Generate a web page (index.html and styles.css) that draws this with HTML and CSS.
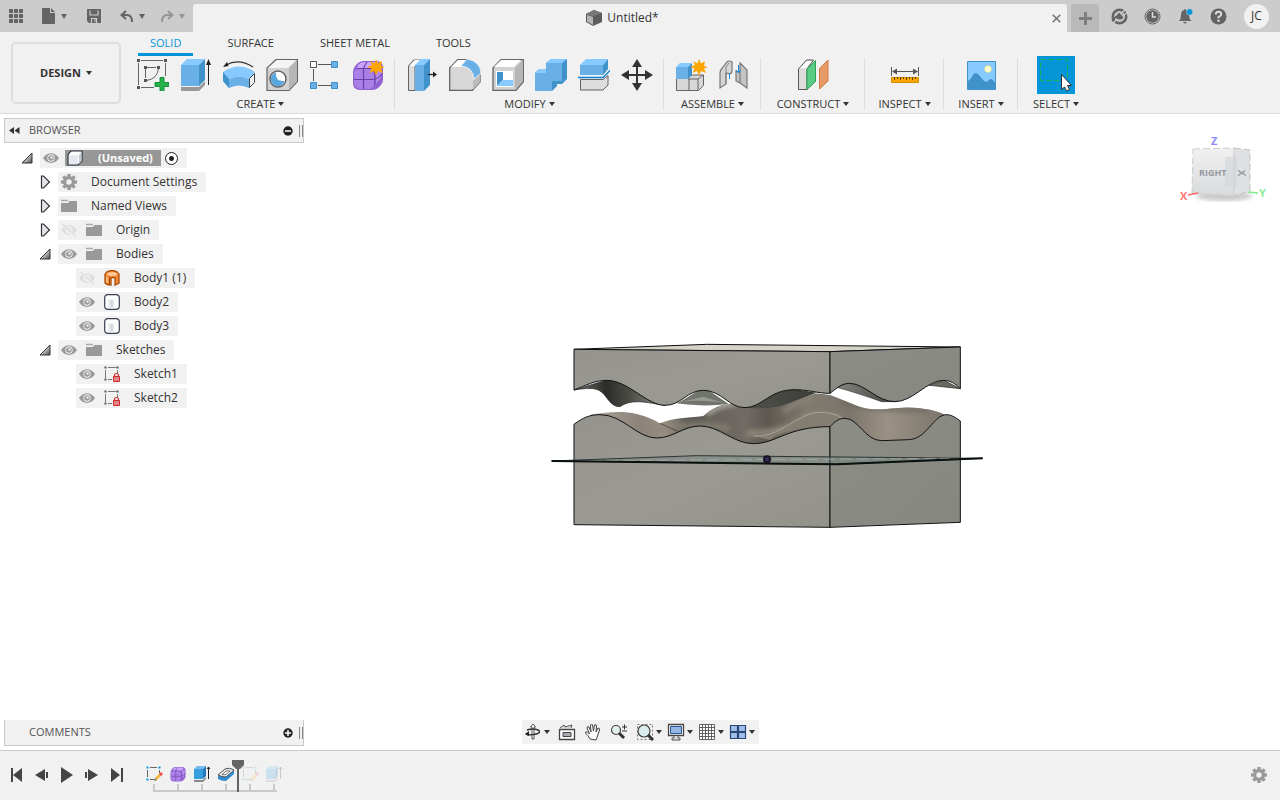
FILE: index.html
```html
<!DOCTYPE html>
<html lang="en">
<head>
<meta charset="utf-8">
<meta name="viewport" content="width=device-width, initial-scale=1">
<title>Untitled*</title>
<link rel="stylesheet" href="styles.css">
</head>
<body>
<svg class="defs" aria-hidden="true">
  <defs>
    <linearGradient id="gTwist" x1="0" y1="0" x2="1" y2="1"><stop offset=".3" stop-color="#f4f4f4"/><stop offset="1" stop-color="#444"/></linearGradient>
    <linearGradient id="gCyl"><stop offset="0" stop-color="#fff"/><stop offset=".5" stop-color="#cfd4dc"/><stop offset=".8" stop-color="#fff"/></linearGradient>
  </defs>
  <symbol id="eye" viewBox="0 0 16 16"><path d="M0 8C4 1.500 12 1.500 16 8 12 14.500 4 14.500 0 8Z" fill="#999"/><circle cx="8" cy="8" r="3.700" fill="#f1f1f1"/><circle cx="8" cy="8" r="2.800" fill="#999"/><circle cx="8.500" cy="7.500" r="1.200" fill="#f1f1f1"/></symbol>
  <symbol id="eye-off" viewBox="0 0 16 16"><path d="M0 8C4 1.500 12 1.500 16 8 12 14.500 4 14.500 0 8Z" fill="#dedede"/><circle cx="8" cy="8" r="3.500" fill="#f1f1f1"/><circle cx="8" cy="8" r="2" fill="#dedede"/><path d="M1 1.500 15 15" stroke="#f1f1f1" stroke-width="3"/><path d="M1.500 2 14.500 14" stroke="#dcdcdc" stroke-width="1.500"/></symbol>
  <symbol id="folder" viewBox="0 0 16 16"><path d="M0 14V5h7l1.500-2H16v11Z" fill="#999"/><path d="M0 2.500h7" stroke="#aaa" stroke-width="1.500"/></symbol>
  <symbol id="gear" viewBox="0 0 16 16"><g fill="#999"><path id="tooth" d="M6.300 0h3.400v16H6.300Z"/><use href="#tooth" transform="rotate(45 8 8)"/><use href="#tooth" transform="rotate(90 8 8)"/><use href="#tooth" transform="rotate(135 8 8)"/><circle cx="8" cy="8" r="6"/></g><circle cx="8" cy="8" r="2.700" fill="#f1f1f1"/></symbol>
  <symbol id="open" viewBox="0 0 12 14"><path d="M11 2V12H1Z" fill="url(#gTwist)" stroke="#333"/></symbol>
  <symbol id="closed" viewBox="0 0 12 14"><path d="M2.500 1v12h2L10.500 7 4.500 1Z" fill="#e4e6ea" stroke="#333" stroke-width="1.200"/></symbol>
  <symbol id="body" viewBox="0 0 16 16"><path d="M.7 4Q.7.7 4 .7h8q3.300 0 3.300 3.300v8q0 3.300-3.300 3.300H4Q.7 15.300.7 12Z" fill="#fff" stroke="#363e50" stroke-width="1.200"/><path d="M3 5q5 1.500 10 0v8.500H3Z" fill="url(#gCyl)"/></symbol>
  <symbol id="sketch" viewBox="0 0 16 16"><path d="M4 1.500h8M1.500 4v8M13.500 4v3M4 13.500h4" stroke="#777" fill="none"/><path d="M.5.500h2v2h-2ZM12.500.500h2v2h-2ZM.5 12.500h2v2h-2Z" fill="#555"/><path d="M10.500 10V9.500a2 2 0 0 1 4 0V10" fill="none" stroke="#cf2730" stroke-width="1.200"/><path d="M9.500 10.500h6v5h-6Z" fill="#e38484" stroke="#cf2730"/></symbol>
  <symbol id="tl-sketch" viewBox="0 0 18 18"><path d="M5 2.500h7M2.500 5v7M5 14.500h4M14.500 5v3" stroke="#666" fill="none"/><path d="M1.500 1.500h2v2h-2ZM13.500 1.500h2v2h-2ZM1.500 13.500h2v2h-2Z" fill="#0a96e0"/><path d="m9 16 1-3 5-5 2 2-5 5Z" fill="#f4b73e"/><path d="m14 9 2-2 2 2-2 2Z" fill="#ee4d50"/><path d="m9 16 1-3 2 2Z" fill="#777"/></symbol>
  <symbol id="tl-extrude" viewBox="0 0 18 18"><path d="M1 15h9l3-3v2l-3 3H1Z" fill="#888"/><path d="M1 4h9v10H1Z" fill="#379fe0"/><path d="m1 4 3-3h9l-3 3Z" fill="#77bcec"/><path d="m10 4 3-3v10l-3 3Z" fill="#2679b9"/><path d="M15.500 2v12M14 4l1.500-2L17 4" stroke="#222" fill="none"/></symbol>
  <symbol id="form" viewBox="0 0 32 32"><path d="M1 14Q1 9 4 6l2-2q2-2 6-2h12q7 0 7 7v12q0 3-3 6l-2 2q-2 2-6 2H8q-7 0-7-7Z" fill="#8f60d0"/><path d="M5 8q2-5 8-5h11q4 0 2 3l-3 3q-2 1-5 1H8q-4 0-3-2Z" fill="#c9a5ff"/><path d="M2 14q0-4 5-4h9q6 0 6 5v9q0 6-6 6H9q-7 0-7-7Z" fill="#aa7fe6"/><path d="M23 12q1-4 6-5 2 7-1 13l-5 6Z" fill="#b58aee"/><path d="M15 3q-3 4-3.500 7v20M2 20.500h20.500q5-2 8-6M5 9.500h15q3 2 3 6v10" fill="none" stroke="#6c3fa9" stroke-width="1.200"/></symbol>
</svg>

<header class="titlebar">
  <nav class="quick" aria-label="File">
    <button class="ic" aria-label="Data panel"><svg width="15" height="15" viewBox="0 0 15 15" fill="#646464"><path d="M0 0h4v4H0zM5 0h4v4H5zM10 0h4v4h-4zM0 5h4v4H0zM5 5h4v4H5zM10 5h4v4h-4zM0 10h4v4H0zM5 10h4v4H5zM10 10h4v4h-4z"/></svg></button>
    <button class="ic file" aria-label="File"><svg width="14" height="16" viewBox="0 0 14 16"><path d="M0 1q0-1 1-1h7v5h5v10q0 1-1 1H1q-1 0-1-1ZM9 0l4 4H9Z" fill="#646464"/></svg><i class="dn"></i></button>
    <button class="ic save" aria-label="Save"><svg width="15" height="15" viewBox="0 0 15 15"><path d="M0 0h14v14H2l-2-2Z" fill="#646464"/><path d="M3 1.500V6h8V1.500M4.500 14V9.500h5V14" fill="none" stroke="#ccc" stroke-width="1.200"/><path d="M8 10v3" stroke="#ccc"/></svg></button>
    <button class="ic undo" aria-label="Undo"><svg width="14" height="13" viewBox="0 0 14 13"><path d="M6 1 1.500 5 6 9M2 5h5q5 0 5 7" fill="none" stroke="#646464" stroke-width="2"/></svg><i class="dn"></i></button>
    <button class="ic redo" aria-label="Redo"><svg width="14" height="13" viewBox="0 0 14 13"><path d="m8 1 4.500 4L8 9M12 5H7q-5 0-5 7" fill="none" stroke="#969696" stroke-width="2"/></svg><i class="dn"></i></button>
  </nav>
  <div class="doc-tab">
    <span class="doc-name"><svg width="17" height="16" viewBox="0 0 17 16"><path d="M0 4 8 0l8 3v9l-9 4-7-4Z" fill="#5c5c5c"/><path d="M1 5l6 2v8l-6-3.500Z" fill="#b4b4b4"/><path d="M0 4 8 0l8 3-9 3.500Z" fill="#777"/></svg>Untitled*</span>
    <button class="ic close" aria-label="Close"><svg width="9" height="9" viewBox="0 0 9 9"><path d="m.7.7 7.600 7.600M8.300.7.700 8.300" stroke="#6e6e6e" stroke-width="1.400"/></svg></button>
  </div>
  <button class="new-tab" aria-label="New design"><svg width="13" height="13" viewBox="0 0 13 13"><path d="M6.500 0v13M0 6.500h13" stroke="#7d7d7d" stroke-width="3"/></svg></button>
  <nav class="account" aria-label="Account">
    <button class="ic" aria-label="Extensions"><svg width="17" height="17" viewBox="0 0 17 17"><circle cx="8.500" cy="8.500" r="6.700" fill="none" stroke="#646464" stroke-width="2.600"/><path d="M5.500 7.500q3-5 6.500-1.500 2 4-2 5.500-3 .5-5-1.500L1.500 14l-1-3Z" fill="#646464"/><path d="m10 5.500 4-3.500M12 8l4-3.500" stroke="#ccc" stroke-width="1.500"/><path d="m9 4.500 4.500 5M3 14.500l3-3.500" stroke="#ccc" stroke-width="1.200"/></svg></button>
    <button class="ic" aria-label="Job status"><svg width="17" height="17" viewBox="0 0 17 17"><circle cx="8.500" cy="8.500" r="7.500" fill="none" stroke="#646464"/><circle cx="8.500" cy="8.500" r="6.200" fill="#646464"/><path d="M8.500 4v5H12" fill="none" stroke="#ddd" stroke-width="1.500"/></svg></button>
    <button class="ic" aria-label="Notifications"><svg width="17" height="17" viewBox="0 0 17 17"><path d="M2 13q2-2 2-6 0-4 3-5 1-2 2 0 3 1 3 5 0 4 2.500 6ZM6 14h4q-2 3-4 0Z" fill="#646464"/><circle cx="12.500" cy="4" r="3.200" fill="#0696d7" stroke="#ccc" stroke-width=".5"/></svg></button>
    <button class="ic" aria-label="Help"><svg width="17" height="17" viewBox="0 0 17 17"><circle cx="8.500" cy="8.500" r="8" fill="#646464"/><path d="M5.800 6.500q0-2.700 2.700-2.700t2.700 2.400q0 1.600-2.700 3v1" fill="none" stroke="#ddd" stroke-width="2"/><circle cx="8.500" cy="12.700" r="1.200" fill="#ddd"/></svg></button>
    <button class="avatar">JC</button>
  </nav>
</header>

<section class="ribbon">
  <button class="design">DESIGN<i class="dn"></i></button>
  <div class="ribbon-main">
    <nav class="tabs"><a class="tab on" href="#solid">SOLID</a><a class="tab" href="#surface">SURFACE</a><a class="tab" href="#sheet">SHEET METAL</a><a class="tab" href="#tools">TOOLS</a></nav>
    <div class="groups">
      <div class="group create">
        <div class="tools">
          <button aria-label="Create sketch"><svg viewBox="0 0 32 32"><path d="M4 1.500h22M1.500 4v22M4 28.500h13M28.500 4v13M10 8.500h9M8.500 10v9M21.500 9q-1 11-12 12.500" stroke="#646464" fill="none"/><path d="M0 0h3v3H0ZM27 0h3v3h-3ZM0 27h3v3H0ZM7 7h3v3H7ZM20 7h3v3h-3ZM7 20h3v3H7Z" fill="#555"/><path d="M23 18.500h4v5h5v4h-5v5h-4v-5h-5v-4h5Z" fill="#27b24a" stroke="#159036"/></svg></button>
          <button aria-label="Extrude"><svg viewBox="0 0 32 32"><path d="M1 28h18l6-6v4l-6 6H1Z" fill="#999"/><path d="M1 6h18v21H1Z" fill="#68b0e6"/><path d="m1 6 6-6h18l-6 6Z" fill="#86caff"/><path d="m19 6 6-6v21l-6 6Z" fill="#4092cb"/><path d="M28.500 3v23" stroke="#222"/><path d="m28.500 0 2.500 6h-5Z" fill="#222"/></svg></button>
          <button aria-label="Revolve"><svg viewBox="0 0 32 32"><path d="M0 13Q16 2 32 13l-6 7q-10-5-20 0Z" fill="#86caff"/><path d="m0 13 6 7q10-5 20 0v9q-10-5-20 0l-6-7Z" fill="#68b0e6"/><path d="m0 13 6 7v9l-6-7Z" fill="#4092cb"/><path d="m26.500 19.500 5-5v9l-5 5Z" fill="#f1f1f1" stroke="#444"/><path d="M3 6q13-7 27 2" fill="none" stroke="#333" stroke-width="1.200"/><path d="m0 8 4-5 1.500 4Z" fill="#222"/></svg></button>
          <button aria-label="Hole"><svg viewBox="0 0 32 32"><path d="m1 9 9-8.500h21.500v22L23 31.500H1Z" fill="#d2d2d2" stroke="#646464" stroke-width="1.200"/><path d="m2 9 9-8h19l-8 8Z" fill="#f4f4f4"/><path d="m23 9 8-8v21l-8 9Z" fill="#b6b6b6"/><circle cx="12" cy="20" r="8" fill="#fff" stroke="#646464" stroke-width="1.500"/><path d="M10 13.500a7 7 0 1 0 8.500 8.500Q9 23 10 13.500Z" fill="#5aa7df"/></svg></button>
          <button aria-label="Pattern"><svg viewBox="0 0 32 32"><path d="M9 5.500h13M4.500 10v12M9 26.500h13" stroke="#555"/><path d="M1.500 2.500h6v6h-6Z" fill="#fff" stroke="#555"/><path d="M22.500 2.500h6v6h-6ZM1.500 23.500h6v6h-6ZM22.500 23.500h6v6h-6Z" fill="#68b0e6" stroke="#4092cb"/></svg></button>
          <button aria-label="Create form"><svg viewBox="0 0 32 32"><use href="#form" width="32" height="32"/><path d="m24 0 2 4.500 4-2.500-1 5 4 1-4 1.500 2 4.500-5-2-2 4.500-2-4.500-4.500 2 2-4.500-4.500-1.500L20 6l-2-4 4.500 2.500Z" fill="#faa500"/></svg></button>
        </div><button class="lbl">CREATE<i class="dn"></i></button>
      </div>
      <div class="group modify">
        <div class="tools">
          <button aria-label="Press pull"><svg viewBox="0 0 32 32"><path d="m2.500 7 5-6h7L9 7v24.500H2.500Z" fill="#ddd" stroke="#646464"/><path d="M4 7 9 1h5L9 7Z" fill="#fff"/><path d="M9 6h9v26H9Z" fill="#68b0e6"/><path d="m9 6 6-6h9l-6 6Z" fill="#86caff"/><path d="m18 6 6-6v26l-6 6Z" fill="#4092cb"/><path d="M22 15.500h7" stroke="#222" stroke-width="1.300"/><path d="m27 12.500 4 3-4 3Z" fill="#222"/></svg></button>
          <button aria-label="Fillet"><svg viewBox="0 0 32 32"><path d="m.7 9 8-8.300h10L31 16v7l-7.500 8.300H.7Z" fill="#d7d7d7" stroke="#646464" stroke-width="1.300"/><path d="m2 8 7-7h9l-6 7Z" fill="#fff"/><path d="m24 22 7-7v8l-7 8Z" fill="#bbb"/><path d="m12 7 6-7q13 2 14 14l-7 6Q24 8 12 7Z" fill="#68b0e6" stroke="#fff" stroke-width=".7"/></svg></button>
          <button aria-label="Shell"><svg viewBox="0 0 32 32"><path d="m1 9 8-8.300h22.300v22L24 31.300H1Z" fill="#d2d2d2" stroke="#646464" stroke-width="1.300"/><path d="m2 8 7-7h20l-7 7Z" fill="#fff"/><path d="m23 9 8-8v21l-8 9Z" fill="#b6b6b6"/><path d="M4 12h17v16H4Z" fill="#fff"/><path d="M5 13v14l6-6v-8Z" fill="#4092cb"/><path d="m5 27 6-6h10v6Z" fill="#86caff"/></svg></button>
          <button aria-label="Combine"><svg viewBox="0 0 32 32"><path d="M0 14 4 10h7V4l5-4h16v20l-5 5h-5v2l-5 5H0Z" fill="#4092cb"/><path d="M0 14h11V4h16v18H17v10H0Z" fill="#68b0e6"/><path d="m0 14 4-4h7v4ZM11 4l5-4h16l-5 4Z" fill="#86caff"/></svg></button>
          <button aria-label="Split"><svg viewBox="0 0 32 32"><path d="m2 6 6-6h22l-5 6Z" fill="#86caff"/><path d="M2 6h23v10H2Z" fill="#68b0e6"/><path d="m25 6 5-6v10l-5 6Z" fill="#4092cb"/><path d="M0 18.500h25l7-7" fill="none" stroke="#0f83d6" stroke-width="1.300"/><path d="M2.500 20.500H25l5-4V26l-5 5H2.500Z" fill="#ddd" stroke="#646464"/></svg></button>
          <button aria-label="Move"><svg viewBox="0 0 32 32"><path d="M16 5v22M5 16h22" stroke="#333" stroke-width="2"/><path d="m16 0 5 8H11ZM16 32l5-8H11ZM0 16l8-5v10ZM32 16l-8-5v10Z" fill="#333"/></svg></button>
        </div><button class="lbl">MODIFY<i class="dn"></i></button>
      </div>
      <div class="group assemble">
        <div class="tools">
          <button aria-label="New component"><svg viewBox="0 0 32 32"><path d="M1.500 19v12.500h22l5-5V16h-10Z" fill="#d7d7d7" stroke="#646464"/><path d="M14 19.500V31M13 20h10l5-4M23 20v11" fill="none" stroke="#646464"/><path d="M1 8h12v12H1Z" fill="#68b0e6"/><path d="m1 8 4-4h12l-4 4Z" fill="#86caff"/><path d="m13 8 4-4v12l-4 4Z" fill="#4092cb"/><path d="m24 0 2 4.500 4-2.500-1 5 4 1-4 1.500 2 4.500-5-2-2 4.500-2-4.500-4.500 2 2-4.500-4.500-1.500L20 6l-2-4 4.500 2.500Z" fill="#faa500"/></svg></button>
          <button aria-label="Joint"><svg viewBox="0 0 32 32"><path d="M2 29V14q0-3 3-6l4-5q2-2 5 0v10l-2 2-4-1v11Z" fill="#d4d4d4" stroke="#777" stroke-width="1.200"/><path d="M8 25V8l3-4" fill="none" stroke="#888"/><path d="M29 29 22 24V4l7 7ZM22 13l-4-1v10l4 2Z" fill="#c4c4c4" stroke="#777" stroke-width="1.200"/><path d="M11.500 14v6M20.500 6v8m-2.500-3 2.500 3 2.500-3" stroke="#168be0" fill="none"/></svg></button>
        </div><button class="lbl">ASSEMBLE<i class="dn"></i></button>
      </div>
      <div class="group construct">
        <div class="tools"><button aria-label="Offset plane"><svg viewBox="0 0 32 32"><path d="m1.500 10 8-9h7L10 10v20.500H1.500Z" fill="#ddd" stroke="#555"/><path d="m3 9 7-7h5L9 9Z" fill="#fff"/><path d="m10 10 8.500-8.500v21L10 30.500Z" fill="#5acb84" stroke="#26a353"/><path d="M22.500 9.500 31 1v21l-8.500 8Z" fill="#e69a67" stroke="#cf7b42"/></svg></button></div><button class="lbl">CONSTRUCT<i class="dn"></i></button>
      </div>
      <div class="group inspect">
        <div class="tools"><button aria-label="Measure"><svg viewBox="0 0 32 32"><path d="M2.500 8v9M29.500 8v9M4 12.500h24" stroke="#555"/><path d="m3 12.500 5-3v6ZM29 12.500l-5-3v6Z" fill="#555"/><path d="M2.500 18.500h27v5h-27Z" fill="#faa500" stroke="#d88c00"/><path d="M5.500 18v3M8.500 18v2M11.500 18v3M14.500 18v2M17.500 18v3M20.500 18v2M23.500 18v3M26.500 18v2" stroke="#644400"/></svg></button></div><button class="lbl">INSPECT<i class="dn"></i></button>
      </div>
      <div class="group insert">
        <div class="tools"><button aria-label="Insert image"><svg viewBox="0 0 32 32"><path d="M2.500 2.500h28v28h-28Z" fill="#86caff"/><path d="M3 22q3-2 5-6t6 0l5 6q3 2 5-1 3-3 6 3v6H3Z" fill="#4092cb"/><path d="M2.500 2.500h28v28h-28Z" fill="none" stroke="#4092cb"/><circle cx="23" cy="10" r="3.500" fill="#ffffd0" stroke="#d4cf80" stroke-width=".5"/></svg></button></div><button class="lbl">INSERT<i class="dn"></i></button>
      </div>
      <div class="group select">
        <div class="tools"><button class="active" aria-label="Select"><svg viewBox="0 0 38 38"><path d="M3.500 3.500h27v21h-27Z" fill="none" stroke="#21b34c" stroke-dasharray="5 3"/><path d="M24.500 18.500v15l3-2.500 2 4 3-1.500-2-4h4Z" fill="#fff" stroke="#333"/></svg></button></div><button class="lbl">SELECT<i class="dn"></i></button>
      </div>
    </div>
  </div>
</section>

<main class="viewport">
  <svg class="scene" viewBox="0 114 1280 636" role="img" aria-label="Split body model">
    <defs>
      <linearGradient id="front" x1="0" y1="0" x2="1" y2="1"><stop offset="0" stop-color="#94938d"/><stop offset=".5" stop-color="#9a9992"/><stop offset="1" stop-color="#94938b"/></linearGradient>
      <linearGradient id="side" x1="0" x2="1" y1="0" y2="1"><stop offset="0" stop-color="#8c8e86"/><stop offset="1" stop-color="#858780"/></linearGradient>
      <linearGradient id="dark1"><stop offset="0" stop-color="#73746d"/><stop offset=".35" stop-color="#2b2b28"/><stop offset=".6" stop-color="#4a4a45"/><stop offset="1" stop-color="#8b8d86"/></linearGradient>
      <linearGradient id="dark2"><stop offset="0" stop-color="#50524c"/><stop offset="1" stop-color="#3c3d38"/></linearGradient>
      <linearGradient id="dark3"><stop offset="0" stop-color="#83857e"/><stop offset="1" stop-color="#42433e"/></linearGradient>
      <linearGradient id="surf" gradientUnits="userSpaceOnUse" x1="180" x2="1220" y1="0" y2="0"><stop offset="0" stop-color="#a49c91"/><stop offset=".12" stop-color="#8b8379"/><stop offset=".19" stop-color="#998f82"/><stop offset=".25" stop-color="#5e5b54"/><stop offset=".42" stop-color="#706b64"/><stop offset=".48" stop-color="#5d5851"/><stop offset=".6" stop-color="#817a6f"/><stop offset=".72" stop-color="#7c756b"/><stop offset=".83" stop-color="#9b9285"/><stop offset="1" stop-color="#79736a"/></linearGradient>
      <linearGradient id="cubeF" x1="0" x2="0" y1="0" y2="1"><stop offset="0" stop-color="#f1f1f1"/><stop offset="1" stop-color="#d9dadc"/></linearGradient>
      <filter id="soft" x="-20%" y="-50%" width="140%" height="200%"><feGaussianBlur stdDeviation="8"/></filter>
      <filter id="soft2"><feGaussianBlur stdDeviation="2"/></filter>
      <clipPath id="surfClip"><path d="M150 254C190 250 240 240 290 252C330 262 345 272 360 280C400 262 440 265 490 258C525 225 560 218 590 222L700 232L830 190L870 195C940 220 960 238 1010 238C1070 236 1100 228 1140 235C1180 240 1200 247 1215 254L1150 350H300Z"/></clipPath>
    </defs>
    <g transform="translate(540 330) scale(.33333)" stroke-linejoin="round">
      <g clip-path="url(#surfClip)">
        <path d="M100 170h1150v200H100Z" fill="url(#surf)"/>
        <g filter="url(#soft)" fill="none"><path d="M360 297q120-22 210 0" stroke="#8d8578" stroke-width="12"/><path d="M500 252q45-30 90-32" stroke="#d4d2ca" stroke-width="9"/><path d="M620 310q120 0 185-50 60-10 110 15" stroke="#948c7f" stroke-width="16"/><path d="M820 200q-50 15-90 45" stroke="#8b8478" stroke-width="14"/><path d="M900 215q70 25 270 25" stroke="#6d685f" stroke-width="12"/></g>
      </g>
      <path d="M640 318C720 322 760 260 830 247Q880 246 915 265L870 292Q730 290 690 330Z" fill="#847d72"/>
      <path d="M640 318C720 322 760 260 830 247Q880 246 905 263" fill="none" stroke="#aaa398" stroke-width="3"/>
      <path d="M360 280 412 303" stroke="#333" stroke-width="2"/>
      <path d="M102 180C170 170 180 175 205 210Q222 232 240 230C270 210 300 212 375 227L300 160 200 150Z" fill="url(#dark1)" stroke="#222" stroke-width="2"/>
      <path d="M410 220Q440 205 490 170L565 221Q530 227 480 226 440 224 410 220Z" fill="#72756d"/><path d="M422 216Q470 208 550 218L490 200Z" fill="#959a92"/>
      <path d="M615 233Q700 240 740 222L830 188 760 176 680 195Z" fill="url(#dark2)"/>
      <path d="M890 172Q950 188 1025 215H1065L980 170 925 158Z" fill="url(#dark3)" stroke="#333" stroke-width="2"/>
      <path d="M1168 166 1261 176 1210 150Z" fill="#686a62" stroke="#222" stroke-width="2"/>
      <path d="M102 58 500 43 1261 51 870 65Z" fill="#d5d3c8" stroke="#0c0c0c" stroke-width="3"/>
      <path d="M102 58V180C140 165 165 151 200 151C265 151 320 226 375 226C425 226 440 181 490 181C545 181 565 233 615 233C665 233 690 179 760 179C810 179 830 190 870 190V65Z" fill="url(#front)" stroke="#111" stroke-width="3"/>
      <path d="M870 65V190C890 175 905 160 928 160C975 160 1010 215 1065 215C1120 215 1160 151 1210 151C1230 151 1245 160 1261 176V51Z" fill="url(#side)" stroke="#111" stroke-width="3"/>
      <path d="M102 283C130 262 150 254 180 254C250 254 290 324 350 324C400 324 430 288 480 288C540 288 580 341 640 341C710 341 740 290 870 290V592L102 584Z" fill="url(#front)" stroke="#111" stroke-width="3"/>
      <path d="M870 290C885 275 895 265 915 265C955 265 975 332 1025 332L1105 329C1160 329 1180 254 1220 254C1235 254 1250 265 1261 273V577L870 592Z" fill="url(#side)" stroke="#111" stroke-width="3"/>
      <path d="M35 393 470 377 1328 385 890 403Z" fill="#6d7d7a" fill-opacity=".4" stroke="#2c3432" stroke-width="3"/>
      <path d="M150 392 1230 385" stroke="#aeb9b5" stroke-width="3" stroke-dasharray="36 14" opacity=".65"/>
      <path d="m35 393 855 10 438-18" fill="none" stroke="#091010" stroke-width="6"/>
      <circle cx="681" cy="388" r="9" fill="#382e58" stroke="#171325" stroke-width="6"/>
    </g>
  </svg>

  <svg class="viewcube" viewBox="0 0 120 100" role="img" aria-label="View cube">
    <ellipse cx="64" cy="76" rx="28" ry="5" fill="#777" opacity=".4" filter="url(#soft2)"/>
    <path d="m33 29 41-1v48l-42-3Z" fill="url(#cubeF)" stroke="#ccc" stroke-dasharray="7 3"/>
    <path d="m74 28 16 2v41l-16 5Z" fill="#dfe0e2" stroke="#c4c4c4" stroke-dasharray="7 3"/>
    <path d="M65 37h12v30H65Z" fill="#d2d6dc" opacity=".65"/>
    <text class="cube-t" x="39" y="56">RIGHT</text><path d="m78 50 3 3-3 3m4-5v4m3-5-2 3 3 3" stroke="#999da3" fill="none" stroke-width="1.200"/>
    <path d="m28 75 10-2" stroke="#f66" stroke-width="1.500"/><path d="m88 72 10 1" stroke="#7ee88d" stroke-width="1.500"/>
    <text class="axis z" x="51" y="25">Z</text><text class="axis x" x="20" y="80">X</text><text class="axis y" x="99" y="77">Y</text>
  </svg>

  <aside class="browser">
    <div class="panel-head">
      <button class="ic fold" aria-label="Collapse"><svg width="11" height="7" viewBox="0 0 11 7"><path d="M5 0v7L0 3.500ZM10.500 0v7l-5-3.500Z" fill="#333"/></svg></button><h2>BROWSER</h2>
      <button class="ic" aria-label="Hide browser"><svg width="10" height="10" viewBox="0 0 10 10"><circle cx="5" cy="5" r="4.700" fill="#222"/><path d="M2 5h6" stroke="#fff" stroke-width="1.500"/></svg></button><i class="grip"></i>
    </div>
    <ul class="tree">
      <li class="row root"><svg class="tw"><use href="#open"/></svg><div class="chip"><svg class="i"><use href="#eye"/></svg><span class="sel"><svg class="i" viewBox="0 0 16 16"><path d="M1 5q0-1 2-3l1-1h11v10l-4 4H1Z" fill="#fff" stroke="#2c3240" stroke-width="1.200"/><path d="M2 5h9v9H2Z" fill="#e6e8ef"/><path d="m12 5 2.500-3v9L12 14Z" fill="#c4c9d4"/></svg><b>(Unsaved)</b></span><input type="radio" checked aria-label="Activate (Unsaved)"></div></li>
      <li class="row"><svg class="tw"><use href="#closed"/></svg><div class="chip"><svg class="i"><use href="#gear"/></svg><span>Document Settings</span></div></li>
      <li class="row"><svg class="tw"><use href="#closed"/></svg><div class="chip"><svg class="i"><use href="#folder"/></svg><span>Named Views</span></div></li>
      <li class="row"><svg class="tw"><use href="#closed"/></svg><div class="chip"><svg class="i eye"><use href="#eye-off"/></svg><svg class="i"><use href="#folder"/></svg><span>Origin</span></div></li>
      <li class="row"><svg class="tw"><use href="#open"/></svg><div class="chip"><svg class="i eye"><use href="#eye"/></svg><svg class="i"><use href="#folder"/></svg><span>Bodies</span></div></li>
      <li class="row leaf"><div class="chip"><svg class="i eye"><use href="#eye-off"/></svg><svg class="i" viewBox="0 0 16 16"><path d="M1 4q2-3.500 7-3.500T15 4v9l-4 2V8q-2-1-4 0v7q-4 0-6-2Z" fill="#f28a35" stroke="#a94c05" stroke-width="1.300"/><path d="M2 4q6-4 12 0-2 1.500-4 2-2-.5-4 0-2-.5-4-2Z" fill="#ffc795"/><path d="M3 7v6" stroke="#ffc795" stroke-width="1.500"/><path d="M5.500 6.500V14" stroke="#a94c05"/></svg><span>Body1 (1)</span></div></li>
      <li class="row leaf"><div class="chip"><svg class="i eye"><use href="#eye"/></svg><svg class="i"><use href="#body"/></svg><span>Body2</span></div></li>
      <li class="row leaf"><div class="chip"><svg class="i eye"><use href="#eye"/></svg><svg class="i"><use href="#body"/></svg><span>Body3</span></div></li>
      <li class="row"><svg class="tw"><use href="#open"/></svg><div class="chip"><svg class="i eye"><use href="#eye"/></svg><svg class="i"><use href="#folder"/></svg><span>Sketches</span></div></li>
      <li class="row leaf"><div class="chip"><svg class="i eye"><use href="#eye"/></svg><svg class="i"><use href="#sketch"/></svg><span>Sketch1</span></div></li>
      <li class="row leaf"><div class="chip"><svg class="i eye"><use href="#eye"/></svg><svg class="i"><use href="#sketch"/></svg><span>Sketch2</span></div></li>
    </ul>
  </aside>

  <div class="bottom">
    <div class="panel-head comments"><h2>COMMENTS</h2><button class="ic" aria-label="Show comments"><svg width="10" height="10" viewBox="0 0 10 10"><circle cx="5" cy="5" r="4.700" fill="#222"/><path d="M2 5h6M5 2v6" stroke="#fff" stroke-width="1.500"/></svg></button><i class="grip"></i></div>
    <nav class="navbar" aria-label="Navigation">
      <button class="has" aria-label="Orbit"><svg viewBox="0 0 18 18"><path d="M8 16V4H6.500L9 1l2.500 3H10v12Z" fill="#fff" stroke="#333" stroke-width=".8"/><path d="M2 11q4 2 12-.5 3-2 0-3.500Q9 5 3 7" fill="none" stroke="#333" stroke-width="1.400"/><path d="m1 11 4-3v5Z" fill="#222"/></svg><i class="dn"></i></button>
      <button aria-label="Look at"><svg viewBox="0 0 18 18"><path d="M1.500 6.500h15v10h-15Z" fill="#fff" stroke="#444" stroke-width="1.300"/><path d="M5 9.500h8v4H5Z" fill="#a7acb5" stroke="#444"/><path d="m2 5 4-3 1 2 7-2-1 3" fill="#ddd" stroke="#555"/></svg></button>
      <button aria-label="Pan"><svg viewBox="0 0 18 18"><path d="M6 16Q4 12 1.500 10q0-2 2-1l2 2L3 5q0-2 2-1l2 5-.500-7q1-2 2 0L9.500 8l1-6q2-1 2 1l-.500 6 2-4q2 0 1.500 2l-2 6-1.500 4Z" fill="#fff" stroke="#444"/></svg></button>
      <button aria-label="Zoom"><svg viewBox="0 0 18 18"><circle cx="6" cy="7" r="4.500" fill="#dfeeee" stroke="#444" stroke-width="1.200"/><path d="m9 10 5 5" stroke="#333" stroke-width="3"/><path d="M12 4h5m-2.500-2.500v5M12 8h5" stroke="#333"/></svg></button>
      <button class="has" aria-label="Zoom window"><svg viewBox="0 0 18 18"><path d="M1.500 1.500h15v15h-15Z" fill="none" stroke="#777" stroke-dasharray="2 2"/><circle cx="8" cy="8" r="6" fill="#dceded" stroke="#444" stroke-width="1.200"/><path d="m12 12 5 5" stroke="#333" stroke-width="3"/></svg><i class="dn"></i></button>
      <button class="has" aria-label="Display settings"><svg viewBox="0 0 18 18"><path d="M1.500 1.500h15v11h-15Z" fill="#fff" stroke="#444" stroke-width="1.300"/><path d="M3.500 3.500h11v7h-11Z" fill="#94b7e5" stroke="#2b5595"/><path d="M7 13v2H5v2h8v-2h-2v-2" fill="#ddd" stroke="#555"/></svg><i class="dn"></i></button>
      <button class="has" aria-label="Grid settings"><svg viewBox="0 0 18 18"><path d="M1.500 1.500h15v15h-15ZM4.500 1v16M7.500 1v16M10.500 1v16M13.500 1v16M1 4.500h16M1 7.500h16M1 10.500h16M1 13.500h16" fill="#fff" stroke="#555" stroke-width=".9"/></svg><i class="dn"></i></button>
      <button class="has" aria-label="Viewports"><svg viewBox="0 0 18 18"><path d="M1.500 2.500h7v6h-7ZM9.500 2.500h7v6h-7ZM1.500 9.500h7v6h-7ZM9.500 9.500h7v6h-7Z" fill="#9fbfe8" stroke="#294878" stroke-width="1.200"/></svg><i class="dn"></i></button>
    </nav>
  </div>
</main>

<footer class="timeline">
  <div class="play">
    <button aria-label="Go to start"><svg viewBox="0 0 14 14"><path d="M1 0h2v14H1ZM12 0v14L3 7Z"/></svg></button>
    <button aria-label="Step back"><svg viewBox="0 0 14 14"><path d="M10 1v12L0 7ZM11 4h2v6h-2Z"/></svg></button>
    <button aria-label="Play"><svg viewBox="0 0 14 16"><path d="m1 0 12 8L1 16Z"/></svg></button>
    <button aria-label="Step forward"><svg viewBox="0 0 14 14"><path d="M3 1v12l10-6ZM0 4h2v6H0Z"/></svg></button>
    <button aria-label="Go to end"><svg viewBox="0 0 14 14"><path d="M11 0h2v14h-2ZM1 0v14l9-7Z"/></svg></button>
  </div>
  <div class="track">
    <button aria-label="Sketch1"><svg><use href="#tl-sketch"/></svg></button>
    <button aria-label="Form1"><svg viewBox="0 0 18 18"><use href="#form" x="1" y="1" width="16" height="16"/></svg></button>
    <button aria-label="Extrude1"><svg><use href="#tl-extrude"/></svg></button>
    <button aria-label="Thicken1"><svg viewBox="0 0 18 18"><path d="m1 10 7-6q6-2 9 1v4l-8 7q-5 0-8-2Z" fill="#318bd0"/><path d="m1 10 7-6q4-2 9 1l-8 7q-4 0-8-2Z" fill="#eee" stroke="#555"/><path d="m5 9.500 4-3.500q2-.5 4 0l-4 3.500q-2 .5-4 0Z" fill="#fff" stroke="#555" stroke-width=".8"/></svg></button>
    <button class="dim" aria-label="Sketch2"><svg><use href="#tl-sketch"/></svg></button>
    <button class="dim" aria-label="Extrude2"><svg><use href="#tl-extrude"/></svg></button>
    <svg class="marker" width="12" height="32" viewBox="0 0 12 32"><path d="M0 0h12v5L8 9H7v23H5V9H4L0 5Z" fill="#646464"/></svg>
  </div>
  <button class="ic settings" aria-label="Timeline settings"><svg width="16" height="16"><use href="#gear"/></svg></button>
</footer>
</body>
</html>
```

FILE: styles.css
```css
* { box-sizing: border-box; }
body {
  margin: 0;
  min-height: 100vh;
  display: flex;
  flex-direction: column;
  background: #fff;
  color: #333;
  font: 11px/16px "Open Sans", "Noto Sans", sans-serif;
}
button { border: 0; padding: 0; background: none; color: inherit; font: inherit; display: flex; align-items: center; justify-content: center; }
svg { display: block; flex: none; }
.defs { position: absolute; width: 0; height: 0; }
.dn { width: 0; height: 0; border: 3px solid transparent; border-top: 4px solid #333; border-bottom: 0; flex: none; }

.titlebar { display: flex; height: 32px; background: #ccc; align-items: flex-end; }
.quick { width: 193px; height: 32px; padding-left: 9px; display: flex; align-items: center; }
.quick .dn { border-top-width: 5px; border-top-color: #646464; margin-left: 5px; }
.file { margin-left: 18px; }
.save { margin-left: 20px; }
.undo { margin-left: 18px; }
.redo { margin-left: 15px; }
.quick .redo .dn { border-top-color: #969696; }
.doc-tab { flex: 1; height: 28px; background: #f1f1f1; border-radius: 3px 3px 0 0; display: flex; align-items: center; padding-right: 6px; }
.doc-name { flex: 1; display: flex; gap: 4px; justify-content: center; font-size: 12px; }
.new-tab { width: 28px; height: 28px; margin-left: 4px; background: #b9b9b9; border-radius: 3px 3px 0 0; }
.account { height: 32px; display: flex; align-items: center; gap: 16px; padding: 0 11px 0 12px; }
.avatar { width: 25px; height: 25px; border-radius: 50%; background: #f1f1f1; margin-left: 1px; font-size: 12px; }

.ribbon { display: flex; height: 82px; background: #f1f1f1; border-bottom: 1px solid #dcdcdc; }
.design { width: 110px; height: 62px; margin: 10px 5px 0 11px; border: 2px solid #dedede; border-radius: 5px; font-weight: 700; gap: 5px; }
.ribbon-main { flex: 1; }
.tabs { display: flex; height: 24px; padding-left: 12px; gap: 22px; }
.tab { color: #333; text-decoration: none; height: 24px; padding: 0 12px; line-height: 22px; }
.tab.on { color: #0696d7; border-bottom: 3px solid #0696d7; }
.groups { display: flex; }
.group { position: relative; display: flex; flex-direction: column; align-items: center; }
.group::after { content: ""; position: absolute; right: 0; top: 2px; bottom: 4px; width: 1px; background: #dcdcdc; }
.group:last-child::after { display: none; }
.create, .modify { width: 269px; }
.assemble { width: 97px; }
.construct { width: 104px; }
.inspect { width: 79px; }
.insert { width: 74px; }
.select { width: 76px; }
.tools { display: flex; flex: none; gap: 11px; height: 38px; align-items: center; }
.tools svg { width: 32px; height: 32px; }
.tools .active { background: #0696d7; }
.tools .active svg { width: 38px; height: 38px; }
.lbl { gap: 3px; line-height: 20px; }

.viewport { position: relative; flex: 1; display: flex; flex-direction: column; justify-content: space-between; padding: 4px; min-height: 400px; }
.scene { position: absolute; left: 0; top: 0; width: 100%; height: 100%; }
.viewcube { position: absolute; right: 0; top: 6px; width: 120px; height: 100px; }
.cube-t { font: 700 9px "Open Sans", sans-serif; fill: #979ba1; }
.axis { font: 700 11px "Open Sans", sans-serif; }
.z { fill: #8a8aff; }
.x { fill: #ff7777; }
.y { fill: #8cec97; }
.browser { position: relative; width: 300px; }
.panel-head { width: 300px; height: 25px; display: flex; align-items: center; background: #f1f1f1; border: 1px solid #c9c9c9; padding-left: 4px; }
.panel-head h2 { flex: 1; margin: 0 0 0 9px; font: inherit; line-height: 14px; color: #555; padding-bottom: 2px; }
.fold { width: 11px; }
.grip { width: 4px; height: 12px; border: solid #888; border-width: 0 1px; margin-left: 6px; }
.tree { list-style: none; margin: 3px 0 0; padding: 0; font: 12px/20px "Open Sans", "Noto Sans", sans-serif; }
.row { display: flex; align-items: center; height: 24px; padding-left: 35px; gap: 7px; }
.root { padding-left: 17px; }
.leaf { padding-left: 72px; }
.tw { width: 12px; height: 14px; }
.chip { display: flex; align-items: center; height: 20px; padding: 0 9px 0 3px; background: #f1f1f1; }
.i { width: 16px; height: 16px; margin-right: 14px; }
.i.eye { margin-right: 9px; }
.root .i { margin-right: 6px; }
.sel { display: flex; align-items: center; height: 16px; padding: 0 8px 0 2px; background: #979797; color: #fff; font-size: 11px; }
.root .sel .i { margin-right: 15px; }
input[type="radio"] { appearance: none; width: 13px; height: 13px; margin: 0 0 0 4px; border: 1px solid #222; border-radius: 50%; background: radial-gradient(circle, #222 2px, #fff 3px); }
.bottom { position: relative; display: grid; grid-template-columns: 1fr auto 1fr; align-items: start; }
.comments { height: 26px; border-top: 0; padding-left: 15px; }
.navbar { display: flex; align-items: center; height: 24px; background: #f1f1f1; padding: 0 4px 0 2px; gap: 8px; }
.navbar svg { width: 18px; height: 18px; }
.navbar .has { gap: 2px; }
.navbar .has + .has { margin-left: -3px; }

.timeline { display: flex; align-items: flex-start; height: 50px; background: #f1f1f1; border-top: 1px solid #c9c9c9; padding: 0 13px 0 10px; }
.play { display: flex; gap: 11px; padding-top: 16px; }
.play svg { width: 14px; height: 16px; fill: #444; }
.track { position: relative; display: flex; gap: 6px; margin-left: 21px; padding-top: 14px; }
.track svg { width: 18px; height: 18px; }
.track button { position: relative; padding-bottom: 9px; }
.track button::after { content: ""; position: absolute; left: 8px; bottom: 0; width: 24px; height: 6px; border: solid #c9c9c9; border-width: 0 0 2px 2px; }
.track button:nth-last-child(2)::after { width: 2px; }
.dim svg { opacity: .2; }
.track .marker { position: absolute; left: 87px; top: 9px; width: 12px; height: 32px; }
.settings { margin: 16px 0 0 auto; }
```
